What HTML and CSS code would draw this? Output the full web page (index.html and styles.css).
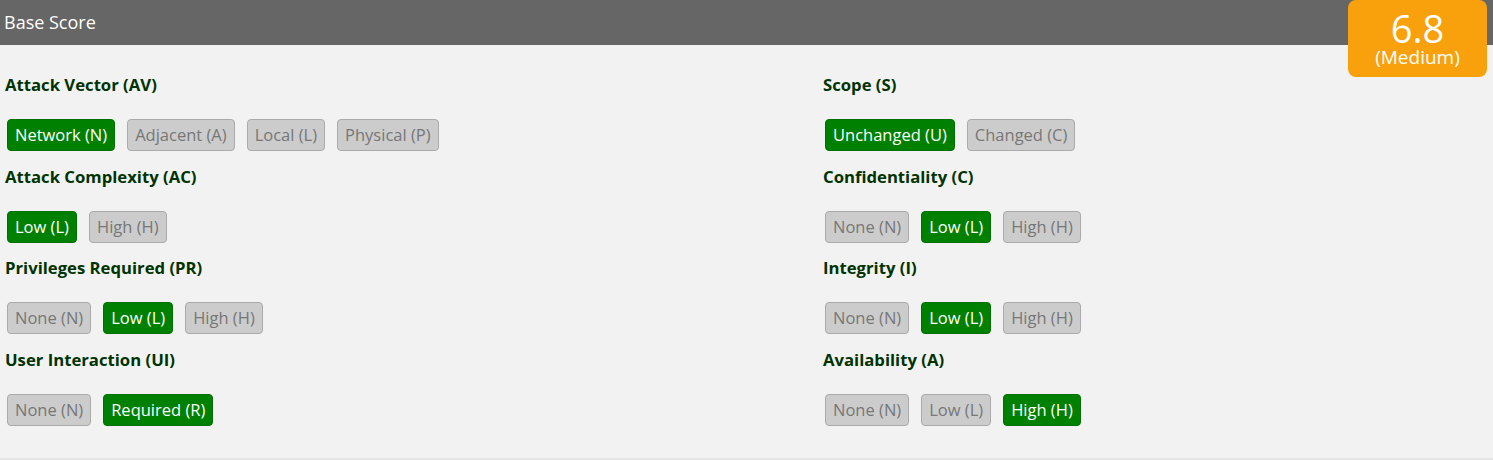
FILE: index.html
```html
<!DOCTYPE html>
<html>
<head>
<meta charset="utf-8">
<link rel="stylesheet" href="styles.css">
</head>
<body>
<div class="panel">
  <div class="bar">Base Score</div>
  <div class="score"><div class="num">6.8</div><div class="sev">(Medium)</div></div>
  <div class="grid">
    <div class="col">
      <div class="metric">
        <h3>Attack Vector (AV)</h3>
        <div class="opts"><span class="btn on">Network (N)</span><span class="btn">Adjacent (A)</span><span class="btn">Local (L)</span><span class="btn">Physical (P)</span></div>
      </div>
      <div class="metric">
        <h3>Attack Complexity (AC)</h3>
        <div class="opts"><span class="btn on">Low (L)</span><span class="btn">High (H)</span></div>
      </div>
      <div class="metric">
        <h3>Privileges Required (PR)</h3>
        <div class="opts"><span class="btn">None (N)</span><span class="btn on">Low (L)</span><span class="btn">High (H)</span></div>
      </div>
      <div class="metric">
        <h3>User Interaction (UI)</h3>
        <div class="opts"><span class="btn">None (N)</span><span class="btn on">Required (R)</span></div>
      </div>
    </div>
    <div class="col">
      <div class="metric">
        <h3>Scope (S)</h3>
        <div class="opts"><span class="btn on">Unchanged (U)</span><span class="btn">Changed (C)</span></div>
      </div>
      <div class="metric">
        <h3>Confidentiality (C)</h3>
        <div class="opts"><span class="btn">None (N)</span><span class="btn on">Low (L)</span><span class="btn">High (H)</span></div>
      </div>
      <div class="metric">
        <h3>Integrity (I)</h3>
        <div class="opts"><span class="btn">None (N)</span><span class="btn on">Low (L)</span><span class="btn">High (H)</span></div>
      </div>
      <div class="metric">
        <h3>Availability (A)</h3>
        <div class="opts"><span class="btn">None (N)</span><span class="btn">Low (L)</span><span class="btn on">High (H)</span></div>
      </div>
    </div>
  </div>
</div>
</body>
</html>
```
FILE: styles.css
```css
html, body { margin: 0; padding: 0; background: #fff; }
body { font-family: "Open Sans", "Noto Sans", sans-serif; }
.panel {
  position: relative;
  background: #f2f2f2;
  height: 458px;
  border-bottom: 2px solid #e6e6e6;
}
.bar {
  background: #666666;
  color: #fff;
  height: 45px;
  line-height: 44px;
  font-size: 18px;
  padding-left: 4px;
}
.score {
  position: absolute;
  top: 0;
  left: 1348px;
  width: 139px;
  height: 77px;
  background: #f9a10c;
  border-radius: 8px;
  color: #fff;
  text-align: center;
}
.score .num { font-size: 38px; line-height: 36px; padding-top: 10px; }
.score .sev { font-size: 19px; line-height: 22px; }
.grid {
  display: grid;
  grid-template-columns: 818px 1fr;
  padding: 29px 0 0 5px;
}
.metric { padding-bottom: 14.5px; }
h3 {
  margin: 0 0 23px 0;
  font-size: 16.7px;
  line-height: 22px;
  font-weight: 700;
  color: #003300;
}
.opts { display: flex; gap: 12px; padding-left: 2px; }
.btn {
  box-sizing: border-box;
  height: 32px;
  line-height: 30px;
  padding: 0 7px;
  font-size: 16.5px;
  border: 1px solid #aaaaaa;
  border-radius: 4px;
  background: #cccccc;
  color: #777777;
}
.btn.on {
  background: #008000;
  border-color: #007000;
  color: #fff;
}
```
